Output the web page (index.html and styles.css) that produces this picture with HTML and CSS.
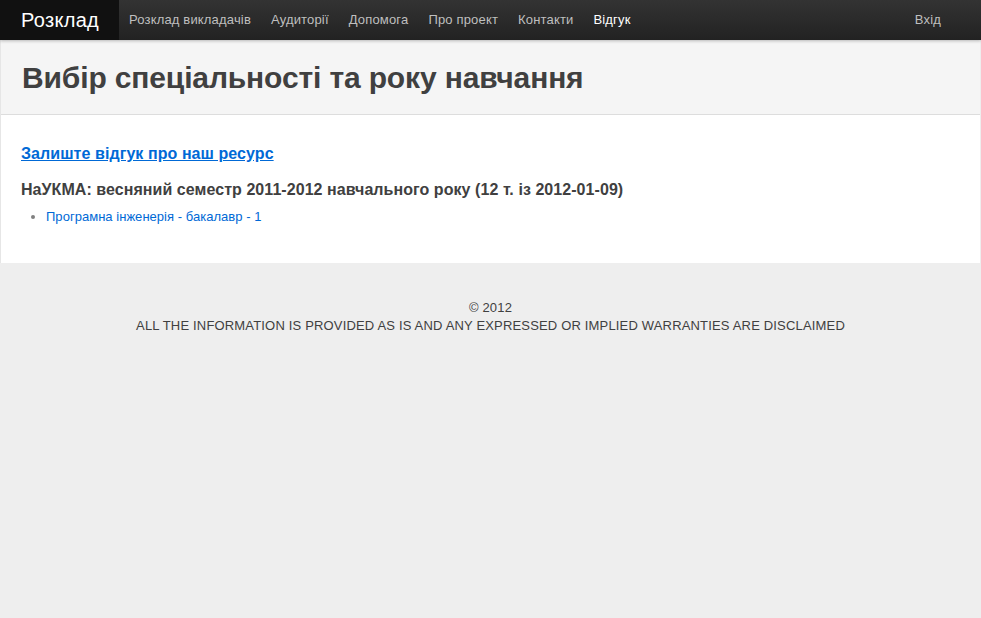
FILE: index.html
```html
<!DOCTYPE html>
<html lang="uk">
<head>
<meta charset="utf-8">
<title>Розклад</title>
<link rel="stylesheet" href="styles.css">
</head>
<body>
<div class="topbar">
  <a class="brand" href="#">Розклад</a>
  <ul class="nav">
    <li><a href="#">Розклад викладачів</a></li>
    <li><a href="#">Аудиторії</a></li>
    <li><a href="#">Допомога</a></li>
    <li><a href="#">Про проект</a></li>
    <li><a href="#">Контакти</a></li>
    <li class="active"><a href="#">Відгук</a></li>
  </ul>
  <ul class="nav nav-right">
    <li><a href="#">Вхід</a></li>
  </ul>
</div>
<div class="content">
  <div class="page-header">
    <h1>Вибір спеціальності та року навчання</h1>
  </div>
  <div class="body">
    <h3 class="feedback"><a href="#">Залиште відгук про наш ресурс</a></h3>
    <h3 class="term">НаУКМА: весняний семестр 2011-2012 навчального року (12 т. із 2012-01-09)</h3>
    <ul class="specs">
      <li><a href="#">Програмна інженерія - бакалавр - 1</a></li>
    </ul>
  </div>
</div>
<footer class="footer">
  <p>© 2012<br>ALL THE INFORMATION IS PROVIDED AS IS AND ANY EXPRESSED OR IMPLIED WARRANTIES ARE DISCLAIMED</p>
</footer>
</body>
</html>
```
FILE: styles.css
```css
* { box-sizing: border-box; }
html, body { margin: 0; padding: 0; }
body {
  background: #eeeeee;
  font-family: "Liberation Sans", Arial, sans-serif;
  font-size: 13px;
  line-height: 18px;
  color: #404040;
  min-height: 618px;
}
a { color: #0069d6; text-decoration: none; }

.topbar {
  height: 40px;
  display: flex;
  align-items: stretch;
  background: linear-gradient(to bottom, #333333, #222222);
  box-shadow: 0 1px 3px rgba(0,0,0,0.25);
  padding-right: 30px;
  position: relative;
  z-index: 2;
}
.brand {
  display: flex;
  align-items: center;
  background: #111111;
  color: #ffffff;
  font-size: 20px;
  letter-spacing: 0.3px;
  padding: 0 0 0 21px;
  width: 119px;
}
.nav {
  list-style: none;
  margin: 0;
  padding: 0;
  display: flex;
}
.nav li a {
  display: block;
  padding: 0 10px;
  line-height: 40px;
  color: #bfbfbf;
  font-size: 13px;
  letter-spacing: 0.17px;
}
.nav li.active a { color: #ffffff; }
.nav-right { margin-left: auto; }

.content {
  width: 980px;
  background: #ffffff;
  border-left: 1px solid #e6e6e6;
}
.page-header {
  background: #f5f5f5;
  border-bottom: 1px solid #dddddd;
  padding: 19px 20px 17px 21px;
}
.page-header h1 {
  margin: 0;
  font-size: 30px;
  line-height: 38px;
  font-weight: bold;
  letter-spacing: -0.14px;
  color: #404040;
}
.body {
  padding: 27px 20px 37px;
}
.feedback {
  margin: 0;
  font-size: 16px;
  line-height: 24px;
  font-weight: bold;
  letter-spacing: 0.07px;
}
.feedback a { text-decoration: underline; }
.term {
  margin: 12px 0 0;
  font-size: 16px;
  line-height: 24px;
  font-weight: bold;
  letter-spacing: 0.06px;
  color: #404040;
}
.specs {
  margin: 6px 0 0;
  padding-left: 25px;
  color: #808080;
  line-height: 18px;
}
.specs li a { font-size: 13px; letter-spacing: 0.03px; }

.footer {
  text-align: center;
  padding-top: 36px;
}
.footer p {
  margin: 0;
  font-size: 13px;
  line-height: 18px;
  letter-spacing: 0.17px;
  color: #404040;
}
```
